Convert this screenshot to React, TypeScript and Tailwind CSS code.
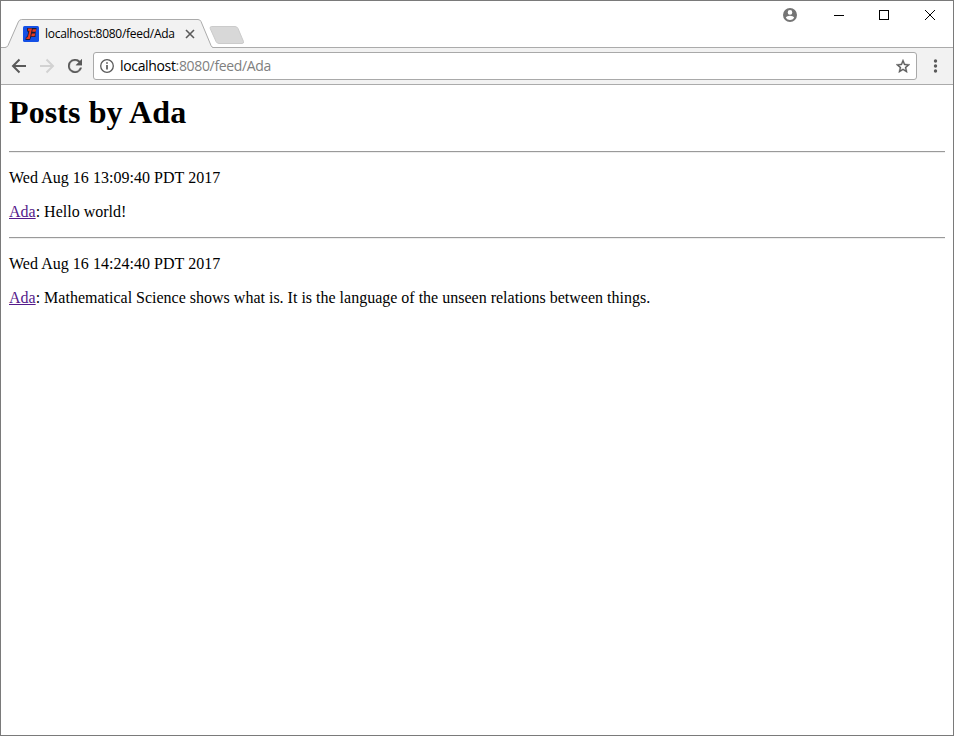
import React from "react";

const posts = [
  { date: "Wed Aug 16 13:09:40 PDT 2017", author: "Ada", text: "Hello world!" },
  {
    date: "Wed Aug 16 14:24:40 PDT 2017",
    author: "Ada",
    text: "Mathematical Science shows what is. It is the language of the unseen relations between things.",
  },
];

function Favicon() {
  return (
    <svg width="16" height="16" viewBox="0 0 16 16" className="shrink-0">
      <rect width="16" height="16" rx="1.5" fill="#1450e6" />
      <path d="M4.2 2H13.6L12.6 6.4L12.4 11H8.2L7 13.9H2.4L3 10.8H4.2L5.3 5.6H4Z" fill="#181a38" />
      <path d="M5.2 2.5H9L6.7 13H3.2L3.6 11.3H4.8L6.4 4.8H4.8Z" fill="#e8391f" />
      <path d="M9.7 3.2H13.2L12.6 5.8H9.2ZM8.8 7.4H12.2L11.6 10.2H8.2Z" fill="#e8391f" />
    </svg>
  );
}

function TabStrip() {
  return (
    <div className="flex h-[46px] items-start">
      <div className="relative mt-[18px] h-[28px] w-[212px] shrink-0">
        <svg className="absolute left-0 top-0" width="212" height="29" viewBox="0 0 212 29">
          <path d="M0 28.5H4Q6 28.5 7 26.5L17.3 3Q18.3 .5 20.5 .5H197Q199 .5 200 2.5L210 26.5Q211 28.5 212 28.5V29H0Z" fill="#f2f2f2" />
          <path d="M0 28.5H4Q6 28.5 7 26.5L17.3 3Q18.3 .5 20.5 .5H197Q199 .5 200 2.5L210 26.5Q211 28.5 212 28.5" fill="none" stroke="#ababab" />
        </svg>
        <div className="relative flex h-[29px] items-center pl-[22px]">
          <Favicon />
          <span className="ml-[6px] w-[131px] whitespace-nowrap font-['Open_Sans',sans-serif] text-[12px] leading-[16px] tracking-[-0.28px] text-black">
            localhost:8080/feed/Ada
          </span>
          <svg className="ml-[9px]" width="10" height="10" viewBox="0 0 10 10">
            <path d="M1 1l8 8M9 1l-8 8" stroke="#5a5a5a" strokeWidth="1.6" />
          </svg>
        </div>
      </div>
      <svg className="-ml-[4px] mt-[25px] shrink-0" width="36" height="19" viewBox="0 0 36 19">
        <path d="M2.5 .5H26Q28 .5 29 2.5L34.5 15.5Q35 17.5 33 17.5H10Q8 17.5 7 15.5L1.2 2.5Q.7 .5 2.5 .5Z" fill="#d8d8d8" stroke="#cbcbcb" />
      </svg>
      <div className="h-[46px] grow" />
      <svg className="mr-[37px] mt-[7px]" width="14" height="14" viewBox="2 2 20 20" fill="#757575">
        <path d="M12 2a10 10 0 1 0 0 20 10 10 0 0 0 0-20zm0 3a3.3 3.3 0 1 1 0 6.6A3.3 3.3 0 0 1 12 5zm0 14.2a7.2 7.2 0 0 1-6-3.2c0-2 4-3.1 6-3.1s6 1.1 6 3.1a7.2 7.2 0 0 1-6 3.2z" />
      </svg>
      <svg className="mr-[4px] mt-[9px]" width="115" height="11" viewBox="0 0 115 11" fill="none" stroke="#000" shapeRendering="crispEdges">
        <path d="M0 5.5H10" />
        <rect x="45.5" y=".5" width="9" height="9" />
        <path d="M91 0l10 10M101 0l-10 10" shapeRendering="auto" />
      </svg>
    </div>
  );
}

function Toolbar() {
  return (
    <div className="flex h-[38px] shrink-0 items-center border-y border-t-[#ababab] border-b-[#ababab] bg-[#f2f2f2]">
      <svg className="ml-[10px]" width="16" height="16" viewBox="0 0 16 16" fill="none" stroke="#5a5a5a" strokeWidth="2">
        <path d="M15 8H2.5M8.5 1.5L2 8l6.5 6.5" />
      </svg>
      <svg className="ml-[12px]" width="16" height="16" viewBox="0 0 16 16" fill="none" stroke="#d2d2d2" strokeWidth="2">
        <path d="M1 8h12.5M7.5 1.5L14 8l-6.5 6.5" />
      </svg>
      <svg className="ml-[13px]" width="14" height="14" viewBox="4 4 16 16" fill="#5a5a5a">
        <path d="M17.65 6.35A8 8 0 1 0 19.73 14h-2.08A6 6 0 1 1 12 6c1.66 0 3.14.69 4.22 1.78L13 11h7V4z" stroke="#5a5a5a" strokeWidth=".4" />
      </svg>
      <div className="ml-[11px] flex h-[28px] w-[824px] items-center rounded-[3px] border border-[#a9a9a9] bg-white">
        <svg className="ml-[6px]" width="14" height="14" viewBox="0 0 14 14">
          <circle cx="7" cy="7" r="6.3" fill="none" stroke="#5a5a5a" strokeWidth="1.3" />
          <path d="M7 6v4.5M7 3.2v1.6" stroke="#5a5a5a" strokeWidth="1.7" />
        </svg>
        <span className="ml-[6px] whitespace-nowrap font-['Open_Sans',sans-serif] text-[14px] leading-[20px] tracking-[-0.34px] text-[#808080]">
          <span className="text-black">localhost</span>:8080/feed/Ada
        </span>
        <svg className="ml-auto mr-[6px]" width="14" height="14" viewBox="2 2 20 19" fill="#5a5a5a" stroke="#5a5a5a" strokeWidth=".5">
          <path d="M22 9.24l-7.19-.62L12 2 9.19 8.63 2 9.24l5.46 4.73L5.82 21 12 17.27 18.18 21l-1.63-7.03L22 9.24zM12 15.4l-3.76 2.27 1-4.28-3.32-2.88 4.38-.38L12 6.1l1.71 4.04 4.38.38-3.32 2.88 1 4.28L12 15.4z" />
        </svg>
      </div>
      <svg className="ml-[16px]" width="5" height="14" viewBox="0 0 5 14" fill="#5a5a5a">
        <circle cx="2.5" cy="2" r="1.7" />
        <circle cx="2.5" cy="7" r="1.7" />
        <circle cx="2.5" cy="12" r="1.7" />
      </svg>
    </div>
  );
}

export default function App() {
  return (
    <div className="flex h-[736px] w-[954px] flex-col overflow-hidden border border-[#7a7a7a] bg-white">
      <TabStrip />
      <Toolbar />
      <main className="px-2 pt-[9px] font-['Liberation_Serif',serif] text-[16px] leading-[18px] text-black">
        <h1 className="mb-[20px] text-[32px] font-bold leading-[37px] tracking-[0.1px]">Posts by Ada</h1>
        {posts.map((post) => (
          <article key={post.date}>
            <div className="h-[2px] border-b border-t border-b-[#eeeeee] border-t-[#9a9a9a]" />
            <p className="mt-4 tracking-[0.03px]">{post.date}</p>
            <p className="my-4">
              <a href="#" className="text-[#551a8b] underline">{post.author}</a>: {post.text}
            </p>
          </article>
        ))}
      </main>
    </div>
  );
}
